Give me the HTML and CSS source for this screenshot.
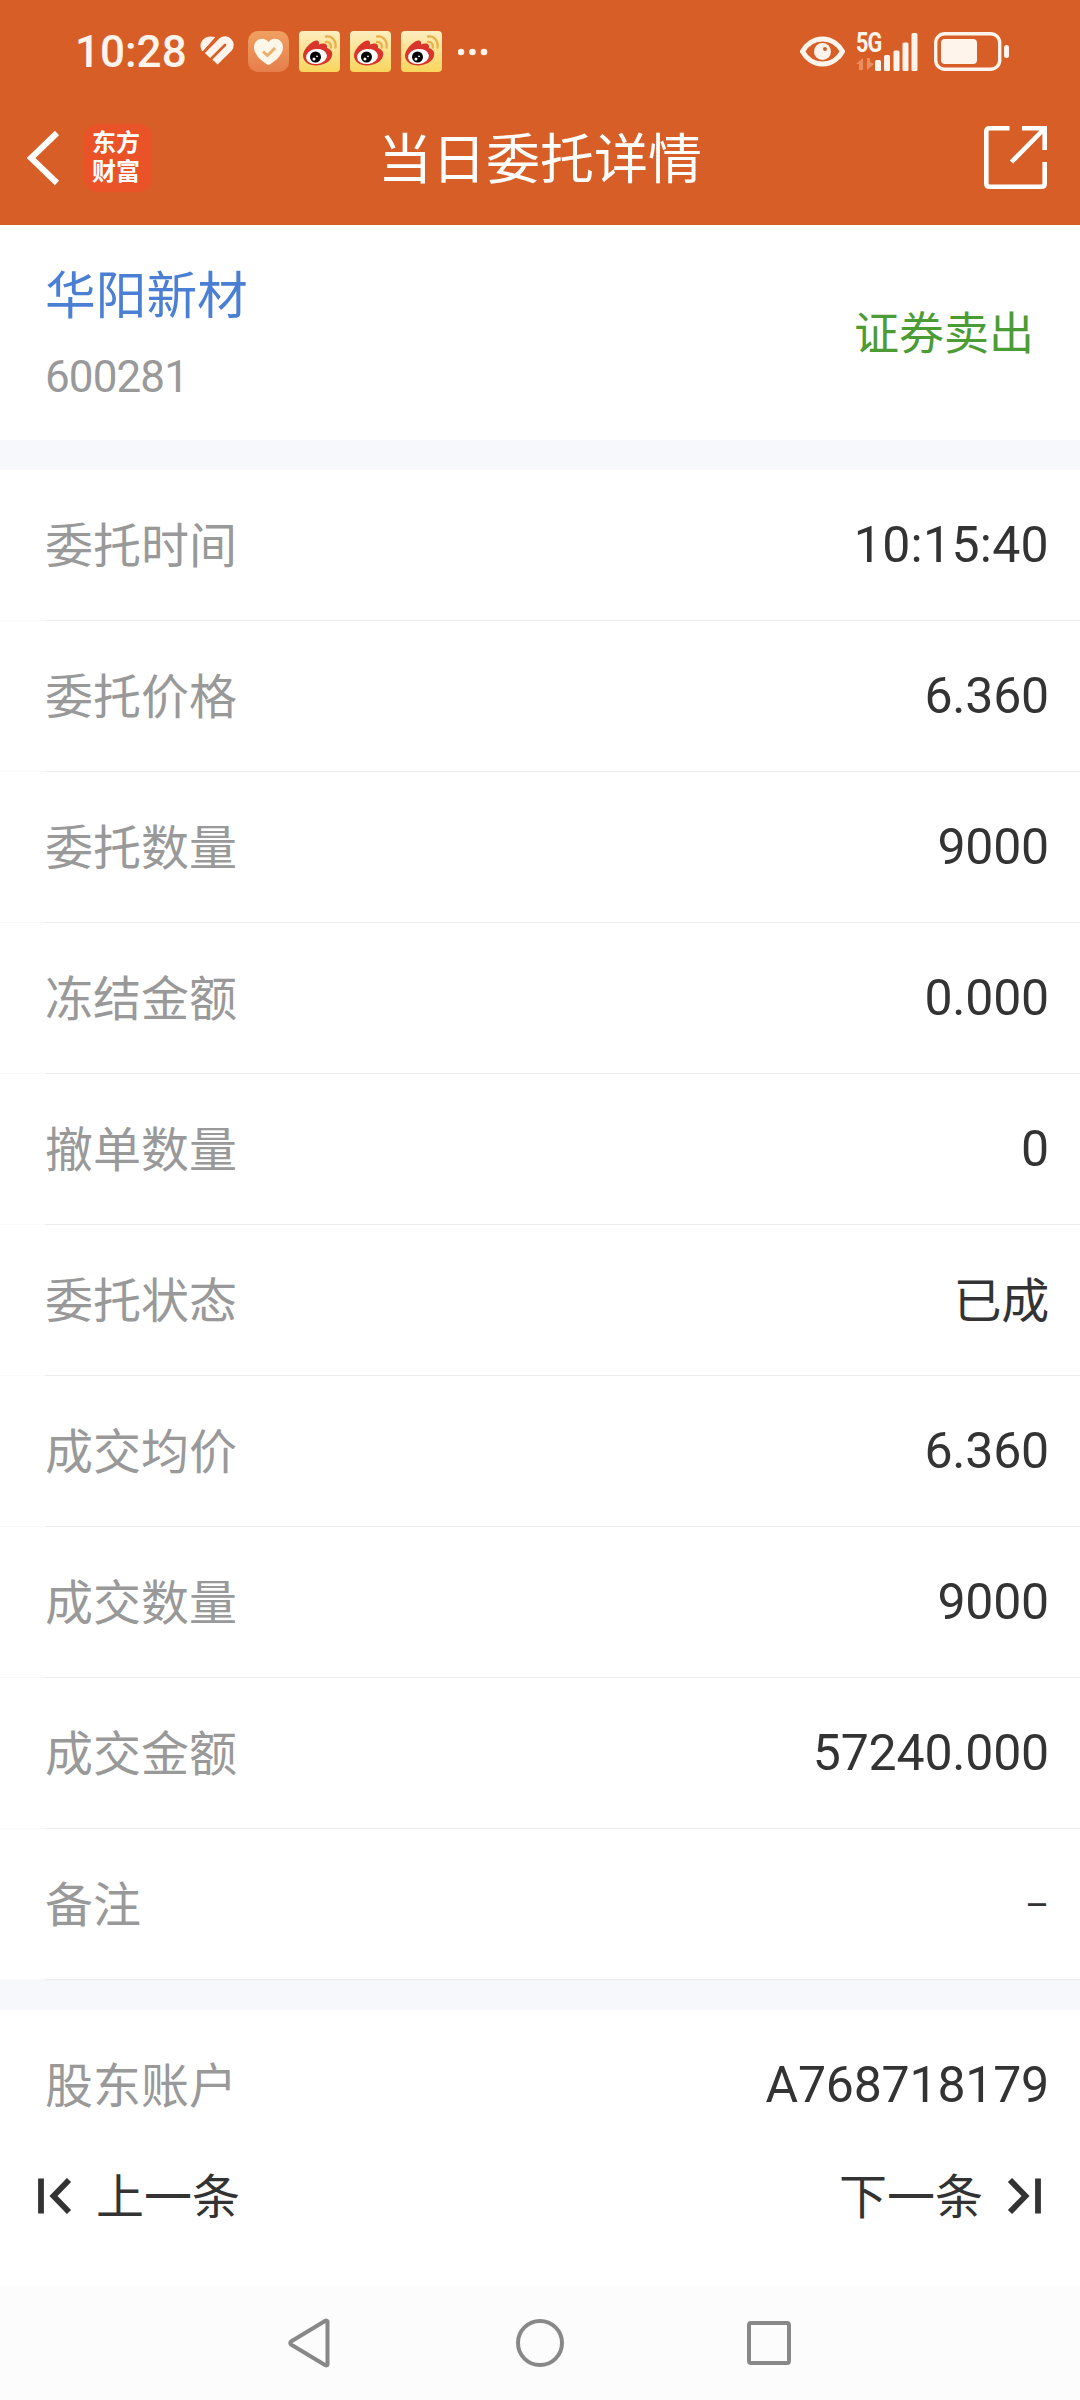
FILE: index.html
```
<!DOCTYPE html>
<html lang="zh-CN">
<head>
  <meta charset="UTF-8">
  <meta name="viewport" content="width=device-width, initial-scale=1.0">
  <title>当日委托详情</title>
  <link rel="stylesheet" href="styles.css">
</head>
<body>
  <!-- shared notification icon -->
  <svg class="defs" width="0" height="0">
    <defs>
      <linearGradient id="weiboBg" x1="0" y1="0" x2="0" y2="1">
        <stop offset="0" stop-color="#fdeec0"/>
        <stop offset="1" stop-color="#f8d55c"/>
      </linearGradient>
      <linearGradient id="heartBg" x1="0" y1="0" x2="0" y2="1">
        <stop offset="0" stop-color="#f0a060"/>
        <stop offset="1" stop-color="#e67e4c"/>
      </linearGradient>
      <symbol id="weibo" viewBox="0 0 41 41">
        <rect width="41" height="41" rx="4" fill="url(#weiboBg)"/>
        <path d="M4 24.5C4 19 11 11 17 9.500C19.500 9 20.500 11 20 13.500C24 11.500 29 12 28 17C32 18.500 34 21 33 25C31.500 31 24 34.500 17 34.500C9.500 34.500 4 30.500 4 24.500Z" fill="#d9352b"/>
        <ellipse cx="17.500" cy="25.500" rx="10.500" ry="7.500" fill="#fff" transform="rotate(-8 17.500 25.500)"/>
        <circle cx="16.500" cy="26" r="5.500" fill="#000"/>
        <circle cx="15" cy="28" r="1.500" fill="#fff"/>
        <circle cx="18" cy="25.300" r="0.900" fill="#fff"/>
        <path d="M27 5.500C33 4.500 37.500 10 36.500 16.500M27 11C30.500 10.500 32.500 13.500 31.800 16.500" fill="none" stroke="#e9b04c" stroke-width="2.300" stroke-linecap="round"/>
      </symbol>
    </defs>
  </svg>

  <header class="header">
    <div class="status-bar">
      <div class="status-left">
        <span class="clock">10:28</span>
        <svg class="health" width="36" height="31" viewBox="0 0 36 31">
          <path d="M2.500 15C-2 7 4 -1 14.500 1.500Z" fill="#fff4ec" stroke="#fff4ec" stroke-linejoin="round"/>
          <path d="M7.500 19.500L22 5A5 5 0 0 1 29 12L15 26" fill="none" stroke="#fff4ec" stroke-width="7.300"/>
        </svg>
        <svg width="41" height="41" viewBox="0 0 41 41">
          <rect width="41" height="41" rx="10" fill="url(#heartBg)"/>
          <path d="M20.500 34C17 32.500 6 25 6 16.500C6 7.500 16 5 20.500 11C25 5 35 7.500 35 16.500C35 25 24 32.500 20.500 34Z" fill="#fff6ea"/>
          <path d="M15 20.500L19.500 24.500L27 17" fill="none" stroke="#eab06c" stroke-width="3"/>
        </svg>
        <svg width="41" height="41"><use href="#weibo"/></svg>
        <svg width="41" height="41"><use href="#weibo"/></svg>
        <svg width="41" height="41"><use href="#weibo"/></svg>
        <svg class="more" width="30" height="8" viewBox="0 0 30 8" fill="#fff4ec">
          <circle cx="3" cy="4" r="3.300"/>
          <circle cx="14.500" cy="4" r="3.300"/>
          <circle cx="26" cy="4" r="3.300"/>
        </svg>
      </div>
      <div class="status-right">
        <svg width="45" height="31" viewBox="0 0 45 31">
          <path d="M2.500 15.500C6 9 13 3 22.500 3S39 9 42.500 15.500C39 22 32 28 22.500 28S6 22 2.500 15.500Z" fill="none" stroke="#fff4ec" stroke-width="5" stroke-linejoin="round"/>
          <circle cx="22.500" cy="15.500" r="8.500" fill="#fff4ec"/>
          <circle cx="25" cy="13" r="2" fill="#d75f27"/>
        </svg>
        <div class="signal">
          <span class="network">5G</span>
          <svg width="63" height="38" viewBox="0 0 63 38" fill="#fff4ec">
            <path d="M0 31L7 25V37H3V31ZM11 25H14V29L18 31L11 37Z" fill="#eb8d62"/>
            <rect x="19" y="27" width="6" height="11" rx="1.500"/>
            <rect x="28" y="22" width="6" height="16" rx="1.500"/>
            <rect x="37.500" y="17.500" width="6" height="20.500" rx="1.500"/>
            <rect x="46.500" y="9.500" width="6" height="28.500" rx="1.500"/>
            <rect x="55.500" y="0" width="6" height="38" rx="1.500"/>
          </svg>
        </div>
        <svg width="76" height="39" viewBox="0 0 76 39">
          <rect x="1.700" y="1.700" width="64" height="35.600" rx="9" fill="none" stroke="#fff4ec" stroke-width="3.400"/>
          <rect x="7" y="7" width="36" height="25" rx="4" fill="#fff4ec"/>
          <rect x="70" y="13" width="5" height="13" rx="2.500" fill="#fff4ec"/>
        </svg>
      </div>
    </div>

    <div class="title-bar">
      <div class="title-left">
        <svg width="33" height="56" viewBox="0 0 33 56">
          <path d="M30 3L4 28L30 53" fill="none" stroke="#fff" stroke-width="6"/>
        </svg>
        <div class="brand">东方<br>财富</div>
      </div>
      <h1>当日委托详情</h1>
      <svg class="share" width="63" height="63" viewBox="0 0 63 63">
        <path d="M25.500 2.300H5.500Q2.300 2.300 2.300 5.500V57.500Q2.300 60.700 5.500 60.700H57.500Q60.700 60.700 60.700 57.500V36M38 2.300H60.700V24M60 3L27.500 36" fill="none" stroke="#fff" stroke-width="4.600"/>
      </svg>
    </div>
  </header>

  <section class="stock">
    <div class="stock-info">
      <div class="stock-name">华阳新材</div>
      <div class="stock-code">600281</div>
    </div>
    <div class="side">证券卖出</div>
  </section>

  <ul class="details">
    <li><span>委托时间</span><b class="time">10:15:40</b></li>
    <li><span>委托价格</span><b>6.360</b></li>
    <li><span>委托数量</span><b>9000</b></li>
    <li><span>冻结金额</span><b>0.000</b></li>
    <li><span>撤单数量</span><b>0</b></li>
    <li><span>委托状态</span><b class="state">已成</b></li>
    <li><span>成交均价</span><b>6.360</b></li>
    <li><span>成交数量</span><b>9000</b></li>
    <li><span>成交金额</span><b>57240.000</b></li>
    <li><span>备注</span><b class="empty">–</b></li>
  </ul>

  <ul class="details account">
    <li><span>股东账户</span><b>A768718179</b></li>
  </ul>

  <div class="pager">
    <a class="pager-link">
      <svg width="34" height="36" viewBox="0 0 34 36">
        <path d="M3 0.500V35.500M31 2L15.500 18L31 34" fill="none" stroke="#333" stroke-width="5.800"/>
      </svg>
      <span>上一条</span>
    </a>
    <a class="pager-link">
      <span>下一条</span>
      <svg width="34" height="36" viewBox="0 0 34 36">
        <path d="M31 0.500V35.500M3 2L18.500 18L3 34" fill="none" stroke="#333" stroke-width="5.800"/>
      </svg>
    </a>
  </div>

  <nav class="system-nav">
    <svg width="42" height="50" viewBox="0 0 42 50">
      <path d="M39.500 3.500V46.500Q39 48 37 47L3 26.500Q1.500 25 3 23.500L37 3Q39 2 39.500 3.500Z" fill="none" stroke="#888" stroke-width="4" stroke-linejoin="round"/>
    </svg>
    <svg width="50" height="50" viewBox="0 0 50 50">
      <circle cx="26" cy="25" r="22" fill="none" stroke="#888" stroke-width="4"/>
    </svg>
    <svg width="44" height="44" viewBox="0 0 44 44">
      <rect x="2" y="2" width="40" height="40" rx="2" fill="none" stroke="#888" stroke-width="4"/>
    </svg>
  </nav>
</body>
</html>
```
FILE: styles.css
```
* {
  box-sizing: border-box;
}

body {
  margin: 0;
  width: 1080px;
  height: 2400px;
  font-family: Roboto, "Noto Sans CJK SC", sans-serif;
  background: #fff;
  color: #333;
}

svg {
  display: block;
  flex-shrink: 0;
}

.defs {
  position: absolute;
}

.header {
  height: 225px;
  background: #d75f27;
  color: #fff;
}

.status-bar {
  display: flex;
  justify-content: space-between;
  align-items: center;
  height: 90px;
  padding: 13px 70px 0 75px;
  color: #fff4ec;
}

.status-left,
.status-right {
  display: flex;
  align-items: center;
  gap: 10px;
}

.clock {
  width: 113px;
  font-size: 44px;
  font-weight: 500;
  line-height: 50px;
}

.health {
  margin: 0 2px;
}

.more {
  margin-left: 6px;
}

.signal {
  position: relative;
  margin: 0 5px 0 1px;
}

/* network type sits over the low signal bars */
.network {
  position: absolute;
  left: 0;
  top: -3px;
  font-size: 27px;
  font-weight: 700;
  line-height: 26px;
  letter-spacing: -1px;
  transform: scaleX(0.8);
  transform-origin: left;
}

.title-bar {
  display: grid;
  grid-template-columns: 1fr auto 1fr;
  align-items: center;
  height: 135px;
  padding: 0 33px;
}

.title-left {
  display: flex;
  align-items: center;
  gap: 24px;
  margin-left: -6px;
}

.brand {
  width: 68px;
  height: 68px;
  padding: 5px 0 0 8px;
  border-radius: 14px;
  background: #ea5228;
  font-size: 24px;
  font-weight: 700;
  line-height: 29px;
}

h1 {
  margin: 0;
  padding-top: 7px;
  font-size: 54px;
  font-weight: 400;
  line-height: 80px;
}

.share {
  justify-self: end;
}

.stock {
  display: flex;
  justify-content: space-between;
  align-items: center;
  height: 215px;
  padding: 0 46px 0 45px;
}

.stock-info {
  padding-top: 8px;
}

.stock-name {
  font-size: 50.7px;
  line-height: 80px;
  color: #4a7fd4;
}

.stock-code {
  font-size: 44px;
  line-height: 80px;
  letter-spacing: -0.9px;
  color: #999;
}

.side {
  padding-bottom: 4px;
  font-size: 45px;
  color: #4b9c35;
}

.details {
  margin: 0;
  padding: 0;
  list-style: none;
  border-top: 30px solid #f6f8fb;
}

/* the divider is fainter left of the labels */
.details li {
  display: flex;
  justify-content: space-between;
  align-items: center;
  height: 151px;
  padding: 0 31px 1px 45px;
  background: linear-gradient(to right, #f8f8f8 45px, #ededed 45px) bottom / 100% 1px no-repeat;
  font-size: 48px;
}

.details span {
  padding-bottom: 6px;
  color: #999;
}

.details b {
  font-size: 50px;
  font-weight: 400;
  letter-spacing: -0.2px;
}

.details .time {
  letter-spacing: 0.3px;
}

.details .state {
  padding-bottom: 6px;
  font-size: 48px;
}

.details .empty {
  padding-top: 2px;
  font-size: 37px;
}

.details.account li {
  background: none;
}

.pager {
  display: flex;
  justify-content: space-between;
  height: 125px;
  padding: 0 39px 55px 38px;
}

.pager-link {
  display: flex;
  align-items: center;
  gap: 24px;
  font-size: 48px;
}

.pager-link span {
  padding-bottom: 7px;
}

.system-nav {
  display: flex;
  justify-content: space-between;
  align-items: center;
  height: 114px;
  padding: 0 289px 0 288px;
  background: #fcfcfc;
}
```
